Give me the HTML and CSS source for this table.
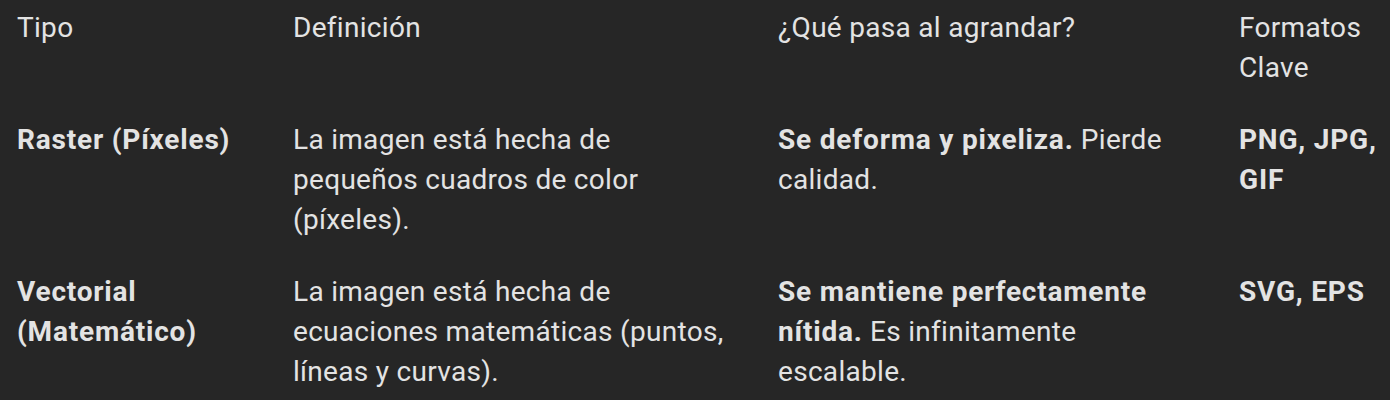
FILE: index.html
```html
<!DOCTYPE html>
<html lang="es">
<head>
<meta charset="utf-8">
<title>Tipos de imagen</title>
<link rel="stylesheet" href="styles.css">
</head>
<body>
<table class="cmp">
  <colgroup>
    <col class="c1"><col class="c2"><col class="c3"><col class="c4">
  </colgroup>
  <thead>
    <tr>
      <th>Tipo</th>
      <th class="def">Definición</th>
      <th class="zoom">¿Qué pasa al agrandar?</th>
      <th class="fmt">Formatos Clave</th>
    </tr>
  </thead>
  <tbody>
    <tr>
      <td><strong>Raster (Píxeles)</strong></td>
      <td class="def">La imagen está hecha de pequeños cuadros de color (píxeles).</td>
      <td class="zoom"><strong>Se deforma y pixeliza.</strong> Pierde calidad.</td>
      <td class="fmt"><strong>PNG, JPG, GIF</strong></td>
    </tr>
    <tr>
      <td><strong>Vectorial (Matemático)</strong></td>
      <td class="def">La imagen está hecha de ecuaciones matemáticas (puntos, líneas y curvas).</td>
      <td class="zoom"><strong>Se mantiene perfectamente nítida.</strong> Es infinitamente escalable.</td>
      <td class="fmt"><strong>SVG, EPS</strong></td>
    </tr>
  </tbody>
</table>
</body>
</html>
```
FILE: styles.css
```css
html, body {
  margin: 0;
  padding: 0;
  background: #262626;
}
body {
  color: #e3e3e3;
  font-family: Roboto, "Noto Sans", sans-serif;
  font-size: 28px;
  line-height: 40px;
  letter-spacing: 0.3px;
  overflow: hidden;
}
.cmp {
  border-collapse: collapse;
  table-layout: fixed;
  width: 1390px;
}
.c1 { width: 276px; }
.c2 { width: 485px; }
.c3 { width: 461px; }
.c4 { width: 168px; }
.cmp th, .cmp td {
  text-align: left;
  vertical-align: top;
  font-weight: 400;
  padding: 16px 16px 16px 17px;
}
.cmp th {
  padding-top: 8px;
}
.cmp td.def, .cmp th.def { padding-right: 30px; }
.cmp td.zoom, .cmp th.zoom { padding-right: 44px; }
.cmp td.fmt, .cmp th.fmt { padding-right: 0; }
.cmp strong {
  font-weight: 700;
  letter-spacing: 0.8px;
}
```
